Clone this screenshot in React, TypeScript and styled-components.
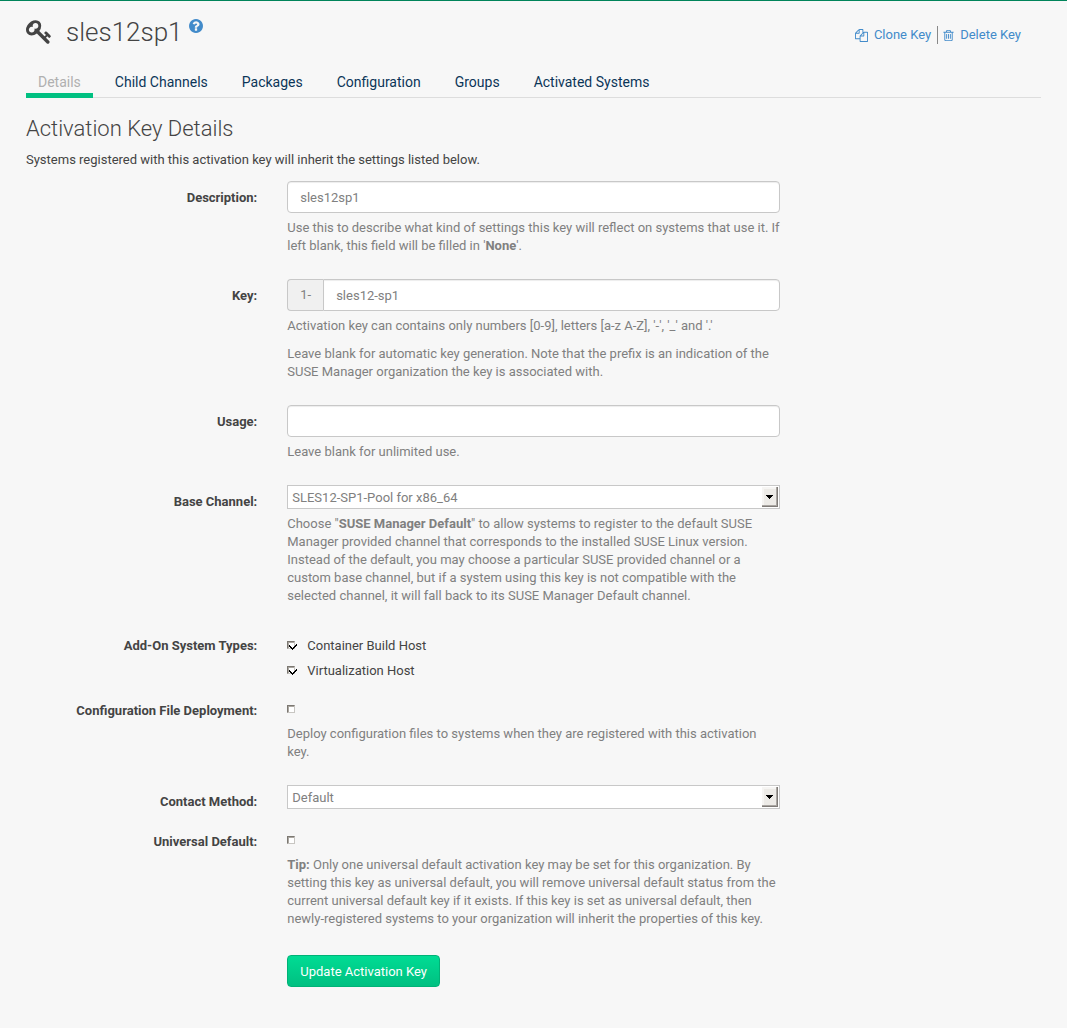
import React from "react";
import styled, { createGlobalStyle } from "styled-components";

const color = {
  page: "#f7f7f7",
  text: "#444444",
  muted: "#808080",
  line: "#dddddd",
  field: "#c8c8c8",
  link: "#428bca",
  tab: "#0b3558",
  green: "#00c081",
};

const GlobalStyle = createGlobalStyle`
  *, *::before, *::after { box-sizing: border-box; }
  body {
    margin: 0;
    background: ${color.page};
    color: ${color.text};
    font: 13px/18px Roboto, "Liberation Sans", sans-serif;
  }
  input, select, button { font: inherit; }
`;

const Page = styled.main`
  min-height: 100vh;
  border-top: 1px solid #00845a;
  padding: 16px 26px 40px;
`;

const Header = styled.header`
  display: flex;
  justify-content: space-between;
  align-items: flex-start;
  padding-right: 20px;
`;

const Title = styled.h1`
  display: flex;
  align-items: flex-start;
  margin: 0;
  font-size: 26px;
  line-height: 30px;
  font-weight: 300;
`;

const KeyIcon = styled.svg`
  width: 25px;
  height: 24px;
  margin: 3px 15px 0 0;
  fill: currentColor;
`;

const HelpLink = styled.a`
  display: flex;
  margin: 2px 0 0 6px;
  color: ${color.link};
  svg {
    width: 14px;
    height: 14px;
    fill: currentColor;
  }
`;

const Toolbar = styled.div`
  display: flex;
  align-items: center;
  margin-top: 9px;
`;

const ToolLink = styled.a`
  display: flex;
  align-items: center;
  gap: 6px;
  padding: 0 6px 0 5px;
  color: ${color.link};
  text-decoration: none;
  & + & {
    border-left: 1px solid #888888;
    padding-right: 0;
  }
  svg {
    height: 13px;
    fill: currentColor;
  }
`;

const Tabs = styled.nav`
  display: flex;
  gap: 10px;
  margin-top: 24px;
  border-bottom: 1px solid ${color.line};
`;

const Tab = styled.a<{ $active?: boolean }>`
  padding: 1px 12px;
  margin-bottom: -1px;
  border-bottom: 5px solid ${(p) => (p.$active ? color.green : "transparent")};
  color: ${(p) => (p.$active ? "#b0b0b0" : color.tab)};
  font-size: 14px;
  line-height: 20px;
  text-decoration: none;
`;

const SectionTitle = styled.h2`
  margin: 18px 0 0;
  font-size: 22px;
  line-height: 26px;
  font-weight: 300;
`;

const Intro = styled.p`
  margin: 9px 0 12px;
`;

const Form = styled.form`
  display: flex;
  flex-direction: column;
  gap: 14px;
  margin: 0 -15px;
`;

const Group = styled.div`
  display: grid;
  grid-template-columns: 25% 50%;
`;

const Caption = styled.label`
  padding: 8px 15px 0;
  font-weight: 700;
  text-align: right;
`;

const Control = styled.div`
  padding: 0 15px;
  grid-column: 2;
`;

const Help = styled.p`
  margin: 6px 0 10px;
  color: ${color.muted};
  & + & {
    margin-top: 0;
  }
`;

const TextInput = styled.input`
  display: block;
  width: 100%;
  height: 32px;
  padding: 0 12px;
  border: 1px solid ${color.field};
  border-radius: 4px;
  background: #ffffff;
  box-shadow: inset 0 1px 1px rgba(0, 0, 0, 0.075);
  color: ${color.muted};
`;

const InputGroup = styled.div`
  display: flex;
  ${TextInput} {
    flex: 1;
    min-width: 0;
    border-radius: 0 4px 4px 0;
  }
`;

const Prefix = styled.span`
  padding: 6px 12px;
  border: 1px solid ${color.field};
  border-right: 0;
  border-radius: 4px 0 0 4px;
  background: #f0f0f0;
  color: ${color.muted};
`;

const SelectBox = styled.div`
  position: relative;
  height: 24px;
  svg {
    position: absolute;
    top: 2px;
    right: 2px;
    pointer-events: none;
  }
`;

const Select = styled.select`
  appearance: none;
  width: 100%;
  height: 24px;
  padding: 2px 20px 0 4px;
  border: 1px solid ${color.field};
  border-radius: 0;
  background: #ffffff;
  color: ${color.muted};
`;

const CheckList = styled.div`
  display: flex;
  flex-direction: column;
  gap: 7px;
  padding-top: 8px;
`;

const SingleCheck = styled.div`
  height: 25px;
  padding-top: 11px;
`;

const Tick = styled.span`
  position: relative;
  display: block;
  width: 8px;
  height: 8px;
  svg {
    position: absolute;
    top: 0;
    left: 0;
    overflow: visible;
    pointer-events: none;
    visibility: hidden;
  }
  input:checked + svg {
    visibility: visible;
  }
`;

const CheckLabel = styled.label`
  display: flex;
  align-items: flex-start;
  gap: 12px;
  ${Tick} {
    margin-top: 4px;
  }
`;

const TickInput = styled.input`
  appearance: none;
  display: block;
  width: 8px;
  height: 8px;
  margin: 0;
  border: 1px solid;
  border-color: #7c7872 #c8c6c2 #c8c6c2 #7c7872;
  background: #ffffff;
  box-shadow: inset 1px 1px 0 #aaa6a0;
`;

const Submit = styled.button`
  height: 32px;
  margin-top: 3px;
  padding: 2px 12px 0;
  border: 1px solid #00b277;
  border-radius: 4px;
  background: linear-gradient(#00dc94, #00c081);
  color: #ffffff;
`;

function Checkbox({ id, checked }: { id: string; checked?: boolean }) {
  return (
    <Tick>
      <TickInput id={id} type="checkbox" defaultChecked={checked} />
      <svg width="10" height="9" viewBox="0 0 10 9" shapeRendering="crispEdges" aria-hidden="true">
        <path d="M2 4h1v1h1v1h1v1h1v-1h1v-1h1v-1h1v-1h1v2h-1v1h-1v1h-1v1h-1v1h-1v-1h-1v-1h-1v-1h-1z" fill="#000" />
      </svg>
    </Tick>
  );
}

function Dropdown({ id, value }: { id: string; value: string }) {
  return (
    <SelectBox>
      <Select id={id} defaultValue={value}>
        <option>{value}</option>
      </Select>
      <svg width="16" height="20" viewBox="0 0 16 20" shapeRendering="crispEdges" aria-hidden="true">
        <path d="M0 0h16v20h-16z" fill="#807c78" />
        <path d="M0 0h15v19h-15z" fill="#aaa6a2" />
        <path d="M0 0h14v18h-14z" fill="#f6f5f3" />
        <path d="M2 2h12v16h-12z" fill="#edebe7" />
        <path d="M4 8h7v1h-1v1h-1v1h-1v1h-1v-1h-1v-1h-1v-1h-1z" fill="#000" />
      </svg>
    </SelectBox>
  );
}

const tabs = ["Details", "Child Channels", "Packages", "Configuration", "Groups", "Activated Systems"];

export default function App() {
  return (
    <Page>
      <GlobalStyle />
      <Header>
        <Title>
          <KeyIcon viewBox="0 128 1683 1592" aria-hidden="true">
            <path d="M832 512q0-80-56-136t-136-56-136 56-56 136q0 42 19 83-41-19-83-19-80 0-136 56t-56 136 56 136 136 56 136-56 56-136q0-42-19-83 41 19 83 19 80 0 136-56t56-136zm851 704q0 17-49 66t-66 49q-9 0-28.5-16t-36.5-33-38.5-40-24.5-26l-96 96 220 220q28 28 28 68 0 42-39 81t-81 39q-40 0-68-28l-671-671q-176 131-365 131-163 0-265.5-102.5t-102.5-265.5q0-160 95-313t248-248 313-95q163 0 265.5 102.5t102.5 265.5q0 189-131 365l355 355 96-96q-3-3-26-24.5t-40-38.5-33-36.5-16-28.5q0-17 49-66t66-49q13 0 23 10 6 6 46 44.5t82 79.5 86.5 86 73 78 28.5 41z" />
          </KeyIcon>
          sles12sp1
          <HelpLink href="#help" aria-label="Help">
            <svg viewBox="128 128 1536 1536" aria-hidden="true">
              <path d="M1024 1376v-192q0-14-9-23t-23-9h-192q-14 0-23 9t-9 23v192q0 14 9 23t23 9h192q14 0 23-9t9-23zm256-672q0-88-55.5-163t-138.5-116-170-41q-243 0-371 213-15 24 8 42l132 100q7 6 19 6 16 0 25-12 53-68 86-92 34-24 86-24 48 0 85.5 26t37.5 59q0 38-20 61t-68 45q-63 28-115.5 86.5t-52.5 125.5v36q0 14 9 23t23 9h192q14 0 23-9t9-23q0-19 21.5-49.5t54.5-49.5q32-18 49-28.5t46-35 44.5-48 28-60.5 12.5-81zm384 192q0 209-103 385.5t-279.5 279.5-385.5 103-385.5-103-279.5-279.5-103-385.5 103-385.5 279.5-279.5 385.5-103 385.5 103 279.5 279.5 103 385.5z" />
            </svg>
          </HelpLink>
        </Title>
        <Toolbar>
          <ToolLink href="#clone">
            <svg width="13" viewBox="0 0 1792 1792" aria-hidden="true">
              <path d="M1696 384q40 0 68 28t28 68v1216q0 40-28 68t-68 28h-960q-40 0-68-28t-28-68v-288h-544q-40 0-68-28t-28-68v-672q0-40 20-88t48-76l408-408q28-28 76-48t88-20h416q40 0 68 28t28 68v328q68-40 128-40h416zm-544 213l-299 299h299v-299zm-640-384l-299 299h299v-299zm196 647l316-316v-416h-384v416q0 40-28 68t-68 28h-416v640h512v-256q0-40 20-88t48-76zm956 804v-1152h-384v416q0 40-28 68t-68 28h-416v640h896z" />
            </svg>
            Clone Key
          </ToolLink>
          <ToolLink href="#delete">
            <svg width="11" viewBox="192 0 1408 1792" aria-hidden="true">
              <path d="M704 736v576q0 14-9 23t-23 9h-64q-14 0-23-9t-9-23v-576q0-14 9-23t23-9h64q14 0 23 9t9 23zm256 0v576q0 14-9 23t-23 9h-64q-14 0-23-9t-9-23v-576q0-14 9-23t23-9h64q14 0 23 9t9 23zm256 0v576q0 14-9 23t-23 9h-64q-14 0-23-9t-9-23v-576q0-14 9-23t23-9h64q14 0 23 9t9 23zm128 724v-948h-896v948q0 22 7 40.5t14.5 27 10.5 8.5h832q3 0 10.5-8.5t14.5-27 7-40.5zm-672-1076h448l-48-117q-7-9-17-11h-317q-10 2-17 11zm928 32v64q0 14-9 23t-23 9h-96v948q0 83-47 143.5t-113 60.5h-832q-66 0-113-58.5t-47-141.5v-952h-96q-14 0-23-9t-9-23v-64q0-14 9-23t23-9h309l70-167q15-37 54-63t79-26h320q40 0 79 26t54 63l70 167h309q14 0 23 9t9 23z" />
            </svg>
            Delete Key
          </ToolLink>
        </Toolbar>
      </Header>

      <Tabs>
        {tabs.map((name, i) => (
          <Tab key={name} href={"#tab-" + i} $active={i === 0}>
            {name}
          </Tab>
        ))}
      </Tabs>

      <SectionTitle>Activation Key Details</SectionTitle>
      <Intro>Systems registered with this activation key will inherit the settings listed below.</Intro>

      <Form onSubmit={(e) => e.preventDefault()}>
        <Group>
          <Caption htmlFor="description">Description:</Caption>
          <Control>
            <TextInput id="description" type="text" defaultValue="sles12sp1" />
            <Help>
              Use this to describe what kind of settings this key will reflect on systems that use it. If left blank,
              this field will be filled in '<strong>None</strong>'.
            </Help>
          </Control>
        </Group>

        <Group>
          <Caption htmlFor="key">Key:</Caption>
          <Control>
            <InputGroup>
              <Prefix>1-</Prefix>
              <TextInput id="key" type="text" defaultValue="sles12-sp1" />
            </InputGroup>
            <Help>Activation key can contains only numbers [0-9], letters [a-z A-Z], '-', '_' and '.'</Help>
            <Help>
              Leave blank for automatic key generation. Note that the prefix is an indication of the SUSE Manager
              organization the key is associated with.
            </Help>
          </Control>
        </Group>

        <Group>
          <Caption htmlFor="usage">Usage:</Caption>
          <Control>
            <TextInput id="usage" type="text" />
            <Help>Leave blank for unlimited use.</Help>
          </Control>
        </Group>

        <Group>
          <Caption htmlFor="channel">Base Channel:</Caption>
          <Control>
            <Dropdown id="channel" value="SLES12-SP1-Pool for x86_64" />
            <Help>
              Choose "<strong>SUSE Manager Default</strong>" to allow systems to register to the default SUSE Manager
              provided channel that corresponds to the installed SUSE Linux version. Instead of the default, you may
              choose a particular SUSE provided channel or a custom base channel, but if a system using this key is not
              compatible with the selected channel, it will fall back to its SUSE Manager Default channel.
            </Help>
          </Control>
        </Group>

        <Group role="group" aria-labelledby="addons">
          <Caption as="span" id="addons">
            Add-On System Types:
          </Caption>
          <Control>
            <CheckList>
              <CheckLabel htmlFor="container">
                <Checkbox id="container" checked />
                Container Build Host
              </CheckLabel>
              <CheckLabel htmlFor="virtualization">
                <Checkbox id="virtualization" checked />
                Virtualization Host
              </CheckLabel>
            </CheckList>
          </Control>
        </Group>

        <Group>
          <Caption htmlFor="deploy">Configuration File Deployment:</Caption>
          <Control>
            <SingleCheck>
              <Checkbox id="deploy" />
            </SingleCheck>
            <Help>Deploy configuration files to systems when they are registered with this activation key.</Help>
          </Control>
        </Group>

        <Group>
          <Caption htmlFor="contact">Contact Method:</Caption>
          <Control>
            <Dropdown id="contact" value="Default" />
          </Control>
        </Group>

        <Group>
          <Caption htmlFor="universal">Universal Default:</Caption>
          <Control>
            <SingleCheck>
              <Checkbox id="universal" />
            </SingleCheck>
            <Help>
              <strong>Tip:</strong> Only one universal default activation key may be set for this organization. By
              setting this key as universal default, you will remove universal default status from the current universal
              default key if it exists. If this key is set as universal default, then newly-registered systems to your
              organization will inherit the properties of this key.
            </Help>
          </Control>
        </Group>

        <Group>
          <Control>
            <Submit type="submit">Update Activation Key</Submit>
          </Control>
        </Group>
      </Form>
    </Page>
  );
}
